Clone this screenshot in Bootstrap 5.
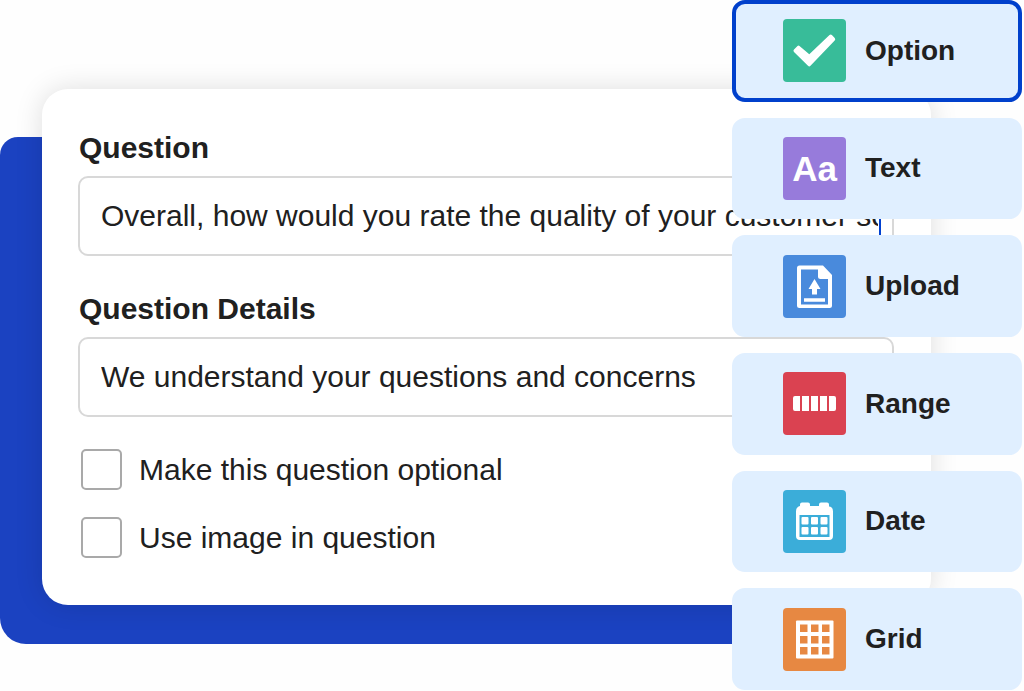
<!DOCTYPE html>
<html lang="en">
<head>
<meta charset="utf-8">
<meta name="viewport" content="width=device-width, initial-scale=1">
<title>Question editor</title>
<link href="https://cdn.jsdelivr.net/npm/bootstrap@5.3.0/dist/css/bootstrap.min.css" rel="stylesheet">
<style>
  body { font-family: "Liberation Sans", Arial, sans-serif; color: #202020; background: #fefefe; }
  /* backdrop, form and palette share one grid cell and overlap */
  .stage { min-height: 100vh; grid-template: 1fr / 1fr; }
  .stage > * { grid-area: 1 / 1; }
  .backdrop { margin: 137px 184px 47px 0; background: #1b42c1; border-radius: 18px 26px 26px 26px; }
  .editor { margin: 89px 93px 86px 42px; padding: 36px 37px 47px 36px; border-radius: 26px; box-shadow: 0 0 28px rgba(0, 0, 0, .13); }
  .field-label { font-size: 30px; line-height: 46px; margin-bottom: 5px; padding-left: 1px; font-weight: 700; }
  .editor .form-control { height: 80px; padding: 0 21px; font-size: 30px; color: #202020; border: 2px solid #d8d8d8; border-radius: 10px; }
  .editor .form-control.editing { padding-right: 14px; }
  .field { margin-bottom: 30px; }
  .caret { right: 13px; top: 20px; width: 2px; height: 40px; background: #0040d0; }
  .checks { gap: 27px; margin: 32px 3px 0; }
  .checks > div { gap: 17px; }
  .checks label { font-size: 30px; line-height: 41px; }
  .checks .form-check-input { width: 41px; height: 41px; border: 2px solid #a9a9a9; border-radius: 5px; }
  .palette { width: 292px; padding: 0 2px 1px 0; gap: 16px; grid-auto-rows: 1fr; }
  .tool { padding: 0 0 0 47px; gap: 19px; font-size: 28px; font-weight: 700; line-height: 36px; color: #202020; background: #e0efff; border: 4px solid #e0efff; border-radius: 13px; }
  .tool:hover { background: #e0efff; }
  .tool.active, .tool.active:hover { color: #202020; background: #e0efff; border-color: #0040cc; }
  .tile { width: 63px; height: 63px; border-radius: 4px; color: #fff; font-size: 35px; }
  .tile-text { background: #977bdb; padding-top: 2px; }
</style>
</head>
<body>
<main class="stage d-grid">
  <div class="backdrop"></div>

  <form class="editor bg-white">
    <div class="field">
      <label class="field-label d-block" for="question">Question</label>
      <div class="position-relative">
        <input class="form-control editing" id="question" type="text" value="Overall, how would you rate the quality of your customer se">
        <span class="caret position-absolute"></span>
      </div>
    </div>
    <div>
      <label class="field-label d-block" for="details">Question Details</label>
      <input class="form-control" id="details" type="text" value="We understand your questions and concerns">
    </div>
    <div class="checks d-flex flex-column">
      <div class="d-flex align-items-center">
        <input class="form-check-input m-0" type="checkbox" id="optional">
        <label for="optional">Make this question optional</label>
      </div>
      <div class="d-flex align-items-center">
        <input class="form-check-input m-0" type="checkbox" id="image">
        <label for="image">Use image in question</label>
      </div>
    </div>
  </form>

  <div class="palette d-grid ms-auto position-relative">
    <button type="button" class="tool btn active d-flex align-items-center">
      <svg class="tile" viewBox="0 0 63 63" aria-hidden="true"><rect width="63" height="63" fill="#38bc99"/><path d="M11 30.500 14.500 27Q15.500 26 16.500 27L26.300 35.300 46.500 16Q47.700 14.900 48.900 16L51.700 19Q52.900 20.200 51.700 21.500L27.500 46.800Q26.300 48 25 46.800L11 33Q9.800 31.800 11 30.500Z" fill="#fff"/></svg>
      <span>Option</span>
    </button>
    <button type="button" class="tool btn d-flex align-items-center">
      <span class="tile tile-text d-flex align-items-center justify-content-center" aria-hidden="true">Aa</span>
      <span>Text</span>
    </button>
    <button type="button" class="tool btn d-flex align-items-center">
      <svg class="tile" viewBox="0 0 63 63" aria-hidden="true"><rect width="63" height="63" fill="#498adc"/><path fill="#fff" fill-rule="evenodd" d="M16 10.500H40L49 20V50.500Q49 53 46.500 53H16.500Q14 53 14 50.500V13Q14 10.500 16.500 10.500ZM18 14.500V49.500H45V24H37.500Q35 24 35 21.500V14.500Z"/><path fill="#fff" d="M31.500 24 37.500 34H34V39.500H29V34H25.500ZM21 43.300H42V46.800H21Z"/></svg>
      <span>Upload</span>
    </button>
    <button type="button" class="tool btn d-flex align-items-center">
      <svg class="tile" viewBox="0 0 63 63" aria-hidden="true"><rect width="63" height="63" fill="#da4251"/><path fill="#fff" d="M12 24H17V39H12Q10 39 10 37V26Q10 24 12 24ZM19 24H26V39H19ZM28 24H35V39H28ZM37 24H44V39H37ZM46 24H51Q53 24 53 26V37Q53 39 51 39H46Z"/></svg>
      <span>Range</span>
    </button>
    <button type="button" class="tool btn d-flex align-items-center">
      <svg class="tile" viewBox="0 0 63 63" aria-hidden="true"><rect width="63" height="63" fill="#3badd9"/><path fill="#fff" fill-rule="evenodd" d="M17 16V14.500Q17 12.500 19 12.500H25Q27 12.500 27 14.500V16H36V14.500Q36 12.500 38 12.500H44Q46 12.500 46 14.500V16.500Q50 17 50 21.500V46Q50 50 46 50H17Q13 50 13 46V21.500Q13 17 17 16ZM16.500 25V47H46.500V25Z"/><g fill="#fff"><rect x="18.500" y="27" width="7" height="7.500" rx="1"/><rect x="28" y="27" width="7" height="7.500" rx="1"/><rect x="37.500" y="27" width="7" height="7.500" rx="1"/><rect x="18.500" y="37" width="7" height="7.500" rx="1"/><rect x="28" y="37" width="7" height="7.500" rx="1"/><rect x="37.500" y="37" width="7" height="7.500" rx="1"/></g></svg>
      <span>Date</span>
    </button>
    <button type="button" class="tool btn d-flex align-items-center">
      <svg class="tile" viewBox="0 0 63 63" aria-hidden="true"><rect width="63" height="63" fill="#e78842"/><rect x="13" y="12.500" width="37.500" height="38" rx="1" fill="#fff"/><path fill="#e78842" d="M17 16.500h7.500v7.500h-7.500zM28 16.500h7.500v7.500h-7.500zM39 16.500h7.500v7.500h-7.500zM17 28h7.500v7.500h-7.500zM28 28h7.500v7.500h-7.500zM39 28h7.500v7.500h-7.500zM17 39h7.500v7.500h-7.500zM28 39h7.500v7.500h-7.500zM39 39h7.500v7.500h-7.500z"/></svg>
      <span>Grid</span>
    </button>
  </div>
</main>
<script src="https://cdn.jsdelivr.net/npm/bootstrap@5.3.0/dist/js/bootstrap.bundle.min.js"></script>
</body>
</html>
